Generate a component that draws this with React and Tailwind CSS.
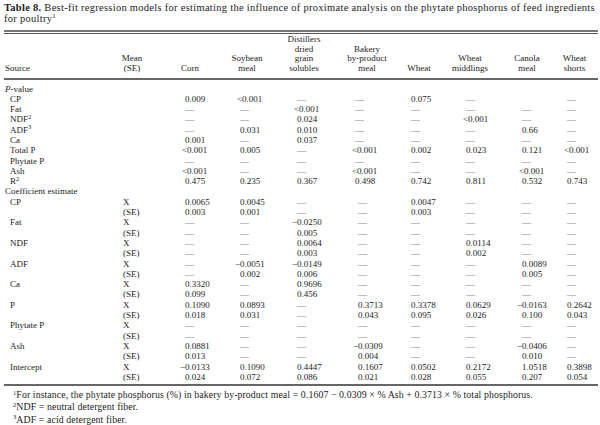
const cols = 'grid grid-cols-[99px_58px_58px_56px_58px_68px_36px_66px_48px_47px]';

// left padding for the digit start in each data column
const padP = ['pl-[20px]', 'pl-[24px]', 'pl-[21px]', 'pl-[22px]', 'pl-[22px]', 'pl-[10px]', 'pl-[29px]', 'pl-[19px]', 'pl-[16px]'];
const padC = ['pl-[20px]', 'pl-[24px]', 'pl-[21px]', 'pl-[22px]', 'pl-[25px]', 'pl-[10px]', 'pl-[29px]', 'pl-[19px]', 'pl-[16px]'];

const pvalues = [
  { label: 'CP', v: ['0.009', '<0.001', '—', '—', '0.075', '—', '', '—'] },
  { label: 'Fat', v: ['—', '—', '<0.001', '—', '—', '—', '—', '—'] },
  { label: 'NDF', sup: '2', v: ['—', '—', '0.024', '—', '—', '<0.001', '—', '—'] },
  { label: 'ADF', sup: '3', v: ['—', '0.031', '0.010', '—', '—', '—', '0.66', '—'] },
  { label: 'Ca', v: ['0.001', '—', '0.037', '—', '—', '—', '—', '—'] },
  { label: 'Total P', v: ['<0.001', '0.005', '—', '<0.001', '0.002', '0.023', '0.121', '<0.001'] },
  { label: 'Phytate P', v: ['—', '—', '—', '—', '—', '—', '—', '—'] },
  { label: 'Ash', v: ['<0.001', '—', '—', '<0.001', '—', '—', '<0.001', '—'] },
  { label: 'R', sup: '2', v: ['0.475', '0.235', '0.367', '0.498', '0.742', '0.811', '0.532', '0.743'] },
];

const coefs = [
  { label: 'CP', x: ['0.0065', '0.0045', '—', '—', '0.0047', '—', '—', '—'], se: ['0.003', '0.001', '—', '—', '0.003', '—', '—', '—'] },
  { label: 'Fat', x: ['—', '—', '−0.0250', '—', '—', '—', '—', '—'], se: ['—', '—', '0.005', '—', '—', '—', '—', '—'] },
  { label: 'NDF', x: ['—', '—', '0.0064', '—', '—', '0.0114', '—', '—'], se: ['—', '—', '0.003', '—', '—', '0.002', '—', '—'] },
  { label: 'ADF', x: ['—', '−0.0051', '−0.0149', '—', '—', '—', '0.0089', '—'], se: ['—', '0.002', '0.006', '—', '—', '—', '0.005', '—'] },
  { label: 'Ca', x: ['0.3320', '—', '0.9696', '—', '—', '—', '—', '—'], se: ['0.099', '—', '0.456', '—', '—', '—', '—', '—'] },
  { label: 'P', x: ['0.1090', '0.0893', '—', '0.3713', '0.3378', '0.0629', '−0.0163', '0.2642'], se: ['0.018', '0.031', '—', '0.043', '0.095', '0.026', '0.100', '0.043'] },
  { label: 'Phytate P', x: ['—', '—', '—', '—', '—', '—', '—', '—'], se: ['—', '—', '—', '—', '—', '—', '—', '—'] },
  { label: 'Ash', x: ['0.0881', '—', '—', '−0.0309', '—', '—', '−0.0406', '—'], se: ['0.013', '—', '—', '0.004', '—', '—', '0.010', '—'] },
  { label: 'Intercept', x: ['−0.0133', '0.1090', '0.4447', '0.1607', '0.0502', '0.2172', '1.0518', '0.3898'], se: ['0.024', '0.072', '0.086', '0.021', '0.028', '0.055', '0.207', '0.054'] },
];

const Num = ({ value }) => {
  if (value === '—') return <span className="text-[#8a8a8a]">—</span>;
  if (value.startsWith('−'))
    return (
      <span>
        <span className="inline-block w-[8px] -ml-[8px] text-right">−</span>
        {value.slice(1)}
      </span>
    );
  if (value.startsWith('<'))
    return (
      <span>
        <span className="inline-block w-[6px] -ml-[4px] text-right">&lt;</span>
        {value.slice(1)}
      </span>
    );
  return <span>{value}</span>;
};

const Sup = ({ children, size = 'text-[6.5px]' }) => (
  <sup className={`${size} leading-none -top-[3.5px]`}>{children}</sup>
);

const Row = ({ label, sup, mean, values, pads }) => (
  <div className={`${cols} h-[10.3px] leading-[10.3px]`}>
    <div className="pl-[6px] whitespace-nowrap">
      {label}
      {sup && <Sup>{sup}</Sup>}
    </div>
    <div className={pads[0]}>{mean}</div>
    {values.map((v, i) => (
      <div key={i} className={`${pads[i + 1]} whitespace-nowrap`}>
        {v && <Num value={v} />}
      </div>
    ))}
  </div>
);

const Head = ({ lines }) => (
  <div className="flex flex-col justify-end text-center">
    {lines.map((l) => (
      <div key={l}>{l}</div>
    ))}
  </div>
);

export default function App() {
  return (
    <div className="w-[600px] h-[425px] bg-white text-[#1c1c1c] font-['Liberation_Serif',serif] overflow-hidden">
      <div className="px-[4px] pt-[3px] text-[10.5px] leading-[10.5px] tracking-[0.28px] whitespace-nowrap">
        <span className="font-bold">Table 8.</span> Best-fit regression models for estimating the influence of proximate analysis on the phytate phosphorus of feed ingredients
        <br />
        for poultry<Sup size="text-[7px]">1</Sup>
      </div>

      <div className="ml-[4px] mr-[2px] mt-[5.5px] text-[9px]">
        <div className="h-[2px] bg-[#777]" />
        <div className="h-px bg-[#555] mt-px" />

        <div className={`${cols} leading-[9.5px] pt-[1.5px] pb-[5px]`}>
          <div className="flex flex-col justify-end pl-[1px]">Source</div>
          <Head lines={['Mean', '(SE)']} />
          <Head lines={['Corn']} />
          <Head lines={['Soybean', 'meal']} />
          <Head lines={['Distillers', 'dried', 'grain', 'solubles']} />
          <Head lines={['Bakery', 'by-product', 'meal']} />
          <Head lines={['Wheat']} />
          <Head lines={['Wheat', 'middlings']} />
          <Head lines={['Canola', 'meal']} />
          <Head lines={['Wheat', 'shorts']} />
        </div>
        <div className="h-[2px] bg-[#666]" />

        <div className="pt-[3.5px]">
          <div className="h-[10.3px] leading-[10.3px] pl-[1px]">
            <i>P</i>-value
          </div>
          {pvalues.map((r) => (
            <Row key={r.label} label={r.label} sup={r.sup} mean="" values={r.v} pads={padP} />
          ))}
          <div className="h-[10.3px] leading-[10.3px] pl-[1px]">Coefficient estimate</div>
          {coefs.map((r) => (
            <div key={r.label}>
              <Row label={r.label} mean="X" values={r.x} pads={padC} />
              <Row label="" mean="(SE)" values={r.se} pads={padC} />
            </div>
          ))}
        </div>

        <div className="h-[2px] bg-[#666] mt-[2px]" />

        <div className="pt-[3px] pl-[9px] text-[9.8px] leading-[12.2px] tracking-[0.1px] whitespace-nowrap">
          <div>
            <Sup>1</Sup>For instance, the phytate phosphorus (%) in bakery by-product meal = 0.1607 − 0.0309 × % Ash + 0.3713 × % total phosphorus.
          </div>
          <div>
            <Sup>2</Sup>NDF = neutral detergent fiber.
          </div>
          <div>
            <Sup>3</Sup>ADF = acid detergent fiber.
          </div>
        </div>
      </div>
    </div>
  );
}
